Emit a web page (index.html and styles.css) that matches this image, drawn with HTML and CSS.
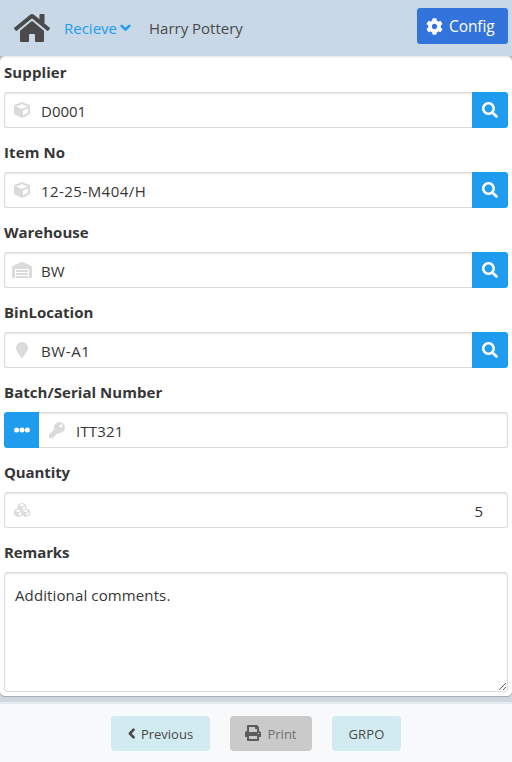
FILE: index.html
```html
<!DOCTYPE html>
<html lang="en">
<head>
<meta charset="utf-8">
<title>Recieve</title>
<link rel="stylesheet" href="styles.css">
</head>
<body>
<svg class="sprite" aria-hidden="true">
  <symbol id="search" viewBox="0 0 512 512"><path d="M505 442.7L405.3 343c-4.5-4.5-10.6-7-17-7H372c27.6-35.3 44-79.7 44-128C416 93.1 322.9 0 208 0S0 93.1 0 208s93.1 208 208 208c48.3 0 92.7-16.4 128-44v16.3c0 6.4 2.5 12.5 7 17l99.7 99.7c9.4 9.4 24.6 9.4 33.9 0l28.3-28.3c9.4-9.4 9.4-24.6.1-34zM208 336c-70.7 0-128-57.2-128-128 0-70.7 57.2-128 128-128 70.7 0 128 57.2 128 128 0 70.7-57.2 128-128 128z"/></symbol>
  <symbol id="cube" viewBox="0 0 512 512"><path d="M239.1 6.3l-208 78c-18.7 7-31.1 25-31.1 45v225.1c0 18.2 10.3 34.8 26.5 42.9l208 104c13.5 6.8 29.4 6.8 42.9 0l208-104c16.3-8.1 26.5-24.8 26.5-42.9V129.3c0-20-12.4-37.9-31.1-44.9l-208-78C262 2.2 250 2.2 239.1 6.3zM256 68.4l192 72v1.1l-192 78-192-78v-1.1l192-72zm32 356V275.5l160-65v133.9l-160 80z"/></symbol>
</svg>
<header class="navbar">
  <svg class="home" viewBox="0 0 576 512"><path d="M280.37 148.26L96 300.11V464a16 16 0 0 0 16 16l112.06-.29a16 16 0 0 0 15.92-16V368a16 16 0 0 1 16-16h64a16 16 0 0 1 16 16v95.64a16 16 0 0 0 16 16.05L464 480a16 16 0 0 0 16-16V300L295.67 148.26a12.19 12.19 0 0 0-15.3 0zM571.6 251.47L488 182.56V44.05a12 12 0 0 0-12-12h-56a12 12 0 0 0-12 12v72.61L318.47 43a48 48 0 0 0-61 0L4.34 251.47a12 12 0 0 0-1.6 16.9l25.5 31A12 12 0 0 0 45.15 301l235.22-193.74a12.19 12.19 0 0 1 15.3 0L530.9 301a12 12 0 0 0 16.9-1.6l25.5-31a12 12 0 0 0-1.7-16.93z"/></svg>
  <a class="nav-link"><span class="receive">Recieve</span><svg class="caret" viewBox="0 0 11 8"><path d="M1.7 1.9L5.5 5.6L9.3 1.9"/></svg></a>
  <span class="user">Harry Pottery</span>
  <button class="config"><svg viewBox="0 0 512 512"><path d="M487.4 315.7l-42.6-24.6c4.3-23.2 4.3-47 0-70.2l42.6-24.6c4.9-2.8 7.1-8.6 5.5-14-11.1-35.6-30-67.8-54.7-94.6-3.8-4.1-10-5.1-14.8-2.3L380.8 110c-17.9-15.4-38.5-27.3-60.8-35.1V25.8c0-5.6-3.9-10.5-9.4-11.7-36.7-8.2-74.3-7.8-109.2 0-5.5 1.2-9.4 6.1-9.4 11.7V75c-22.2 7.9-42.8 19.8-60.8 35.1L88.7 85.5c-4.9-2.8-11-1.9-14.8 2.3-24.7 26.7-43.6 58.9-54.7 94.6-1.7 5.4.6 11.2 5.5 14L67.3 221c-4.3 23.2-4.3 47 0 70.2l-42.6 24.6c-4.9 2.8-7.1 8.6-5.5 14 11.1 35.6 30 67.8 54.7 94.6 3.8 4.1 10 5.1 14.8 2.3l42.6-24.6c17.9 15.4 38.5 27.3 60.8 35.1v49.2c0 5.6 3.9 10.5 9.4 11.7 36.7 8.2 74.3 7.8 109.2 0 5.5-1.2 9.4-6.1 9.4-11.7v-49.2c22.2-7.9 42.8-19.8 60.8-35.1l42.6 24.6c4.9 2.8 11 1.9 14.8-2.3 24.7-26.7 43.6-58.9 54.7-94.6 1.5-5.5-.7-11.3-5.6-14.1zM256 336c-44.1 0-80-35.9-80-80s35.9-80 80-80 80 35.9 80 80-35.9 80-80 80z"/></svg><span>Config</span></button>
</header>

<main class="card">
  <section class="field">
    <label class="label"><span class="wider">Supplier</span></label>
    <div class="group">
      <div class="control"><span class="icon"><svg width="16" height="16"><use href="#cube"/></svg></span><span class="value">D0001</span></div>
      <button class="addon"><svg width="16" height="16"><use href="#search"/></svg></button>
    </div>
  </section>
  <section class="field">
    <label class="label"><span class="wider">Item No</span></label>
    <div class="group">
      <div class="control"><span class="icon"><svg width="16" height="16"><use href="#cube"/></svg></span><span class="value item">12-25-M404/H</span></div>
      <button class="addon"><svg width="16" height="16"><use href="#search"/></svg></button>
    </div>
  </section>
  <section class="field">
    <label class="label"><span>Warehouse</span></label>
    <div class="group">
      <div class="control"><span class="icon"><svg width="20" height="16" viewBox="0 0 640 512"><path d="M504 352H136.4c-4.4 0-8 3.6-8 8l-.1 48c0 4.4 3.6 8 8 8H504c4.4 0 8-3.6 8-8v-48c0-4.4-3.6-8-8-8zm0 96H136.1c-4.4 0-8 3.6-8 8l-.1 48c0 4.4 3.6 8 8 8h368c4.4 0 8-3.6 8-8v-48c0-4.4-3.6-8-8-8zm0-192H136.6c-4.4 0-8 3.6-8 8l-.1 48c0 4.4 3.6 8 8 8H504c4.4 0 8-3.6 8-8v-48c0-4.4-3.6-8-8-8zm106.5-139L338.4 3.7a48.15 48.15 0 0 0-36.9 0L29.5 117C11.7 124.5 0 141.9 0 161.3V504c0 4.4 3.6 8 8 8h80c4.4 0 8-3.6 8-8V256c0-17.6 14.6-32 32.6-32h382.8c18 0 32.6 14.4 32.6 32v248c0 4.4 3.6 8 8 8h80c4.4 0 8-3.6 8-8V161.3c0-19.4-11.7-36.8-29.5-44.3z"/></svg></span><span class="value">BW</span></div>
      <button class="addon"><svg width="16" height="16"><use href="#search"/></svg></button>
    </div>
  </section>
  <section class="field">
    <label class="label"><span>BinLocation</span></label>
    <div class="group">
      <div class="control"><span class="icon"><svg width="12" height="16" viewBox="0 0 384 512"><path d="M172.268 501.67C26.97 291.031 0 269.413 0 192 0 85.961 85.961 0 192 0s192 85.961 192 192c0 77.413-26.97 99.031-172.268 309.67-9.535 13.774-29.93 13.773-39.464 0z"/></svg></span><span class="value bin">BW-A1</span></div>
      <button class="addon"><svg width="16" height="16"><use href="#search"/></svg></button>
    </div>
  </section>
  <section class="field">
    <label class="label"><span class="batch">Batch/Serial Number</span></label>
    <div class="group leading">
      <button class="addon"><svg width="16" height="16" viewBox="0 0 16 16"><circle cx="2.6" cy="8" r="2.5"/><circle cx="8" cy="8" r="2.5"/><circle cx="13.4" cy="8" r="2.5"/></svg></button>
      <div class="control"><span class="icon"><svg width="16" height="16" viewBox="0 0 512 512"><path d="M512 176.001C512 273.203 433.202 352 336 352c-11.22 0-22.19-1.062-32.827-3.069l-24.012 27.014A23.999 23.999 0 0 1 261.223 384H224v40c0 13.255-10.745 24-24 24h-40v40c0 13.255-10.745 24-24 24H24c-13.255 0-24-10.745-24-24v-78.059c0-6.365 2.529-12.47 7.029-16.971l161.802-161.802C163.108 213.814 160 195.271 160 176 160 78.798 238.797.001 335.999 0 433.488-.001 512 78.511 512 176.001zM336 128c0 26.51 21.49 48 48 48s48-21.49 48-48-21.49-48-48-48-48 21.49-48 48z"/></svg></span><span class="value serial">ITT321</span></div>
    </div>
  </section>
  <section class="field">
    <label class="label"><span class="quantity">Quantity</span></label>
    <div class="group">
      <div class="control solo"><span class="icon"><svg width="16" height="16" viewBox="0 0 512 512"><path d="M488.6 250.2L392 214V105.5c0-15-9.3-28.4-23.4-33.7l-100-37.5c-8.1-3.1-17.1-3.1-25.3 0l-100 37.5c-14.1 5.3-23.4 18.7-23.4 33.7V214l-96.6 36.2C9.3 255.5 0 268.9 0 283.9V394c0 13.6 7.7 26.1 19.9 32.2l100 50c10.1 5.1 22.1 5.1 32.2 0l103.9-52 103.9 52c10.1 5.1 22.1 5.1 32.2 0l100-50c12.2-6.1 19.9-18.6 19.9-32.2V283.9c0-15-9.3-28.4-23.4-33.7zM358 214.8l-85 31.9v-68.2l85-37v73.3zM154 104.1l102-38.2 102 38.2v.6l-102 41.4-102-41.4v-.6zm84 291.1l-85 42.5v-79.1l85-38.8v75.4zm0-112l-102 41.4-102-41.4v-.6l102-38.2 102 38.2v.6zm240 112l-85 42.5v-79.1l85-38.8v75.4zm0-112l-102 41.4-102-41.4v-.6l102-38.2 102 38.2v.6z"/></svg></span><span class="value number">5</span></div>
    </div>
  </section>
  <section class="field">
    <label class="label"><span class="quantity">Remarks</span></label>
    <textarea class="textarea">Additional comments.</textarea>
  </section>
</main>

<footer class="footer">
  <button class="action previous"><svg class="back" width="7" height="11" viewBox="0 0 7 11"><path d="M5.6 1.6L1.9 5.5L5.6 9.4"/></svg><span>Previous</span></button>
  <button class="action print"><svg width="16" height="16" viewBox="0 0 512 512"><path d="M448 192V77.25c0-8.49-3.37-16.62-9.37-22.63L393.37 9.37c-6-6-14.14-9.37-22.63-9.37H96C78.33 0 64 14.33 64 32v160c-35.35 0-64 28.65-64 64v112c0 8.84 7.16 16 16 16h48v96c0 17.67 14.33 32 32 32h320c17.67 0 32-14.33 32-32v-96h48c8.84 0 16-7.16 16-16V256c0-35.35-28.65-64-64-64zm-64 256H128v-96h256v96zm0-224H128V64h192v48c0 8.84 7.16 16 16 16h48v96zm48 72c-13.25 0-24-10.75-24-24 0-13.26 10.75-24 24-24s24 10.74 24 24c0 13.25-10.75 24-24 24z"/></svg><span>Print</span></button>
  <button class="action grpo"><span>GRPO</span></button>
</footer>
</body>
</html>
```
FILE: styles.css
```css
* {
  box-sizing: border-box;
}

body {
  margin: 0;
  height: 762px;
  display: flex;
  flex-direction: column;
  overflow: hidden;
  background: linear-gradient(#a9bccd 0 80px, #d1d9df 80px);
  color: #363636;
  font: 15px/24px "Open Sans", "Noto Sans", sans-serif;
}

button {
  border: 0;
  padding: 0;
  margin: 0;
  font: inherit;
  color: inherit;
  display: flex;
  align-items: center;
}

svg {
  display: block;
  flex: none;
  fill: currentColor;
}

.sprite {
  position: absolute;
  width: 0;
  height: 0;
}

.navbar {
  flex: none;
  height: 56px;
  display: flex;
  align-items: center;
  padding: 0 4px 0 14px;
  background: #c8d8e7;
  color: #4a4a4a;
}

.home {
  width: 36px;
  height: 32px;
}

.nav-link {
  display: flex;
  align-items: center;
  gap: 3px;
  width: 85px;
  margin-left: 14px;
  color: #209cee;
}

.caret {
  width: 11px;
  height: 8px;
}

.caret path,
.back path {
  fill: none;
  stroke: currentColor;
  stroke-width: 2.6;
  stroke-linecap: round;
  stroke-linejoin: round;
}

.config {
  width: 91px;
  height: 36px;
  margin: -4px 0 0 auto;
  padding-left: 9px;
  gap: 6px;
  border-radius: 3px;
  background: #3273dc;
  color: #fff;
  font-size: 15.5px;
  letter-spacing: -0.1px;
}

.config svg {
  width: 17px;
  height: 17px;
}

.card {
  flex: none;
  height: 640px;
  padding: 4px;
  background: #fff;
  border-radius: 5px;
  box-shadow: inset 0 2px 2px -1px rgba(10, 10, 10, 0.1), 0 1px 1px rgba(10, 30, 50, 0.25);
}

.field {
  height: 80px;
}

.label {
  display: block;
  height: 32px;
  font-weight: 700;
}

.wider {
  letter-spacing: 0.1px;
}

.batch {
  letter-spacing: 0.05px;
}

.quantity {
  letter-spacing: -0.1px;
}

.group {
  display: flex;
  height: 36px;
}

.control {
  flex: 1;
  display: flex;
  align-items: center;
  border: 1px solid #dbdbdb;
  border-right: 0;
  border-radius: 3px 0 0 3px;
  box-shadow: inset 0 1px 2px rgba(10, 10, 10, 0.1);
}

.leading .control {
  border: 1px solid #dbdbdb;
  border-left: 0;
  border-radius: 0 3px 3px 0;
}

.control.solo {
  border: 1px solid #dbdbdb;
  border-radius: 3px;
}

.icon {
  width: 36px;
  display: flex;
  justify-content: center;
  color: #dbdbdb;
  margin-left: -1px;
}

.leading .icon {
  margin-left: 0;
}

.value {
  padding-top: 2px;
  margin-left: 1px;
}

.item {
  letter-spacing: 0.45px;
}

.bin {
  letter-spacing: 0.6px;
}

.serial {
  letter-spacing: 0.2px;
}

.number {
  margin-left: auto;
  margin-right: 24px;
}

.addon {
  flex: none;
  width: 36px;
  justify-content: center;
  background: #209cee;
  color: #fff;
  border-radius: 0 3px 3px 0;
}

.leading .addon {
  width: 35px;
  border-radius: 3px 0 0 3px;
}

.textarea {
  display: block;
  width: 100%;
  height: 120px;
  padding: 10px;
  border: 1px solid #dbdbdb;
  border-radius: 3px;
  box-shadow: inset 0 1px 2px rgba(10, 10, 10, 0.1);
  font: inherit;
  letter-spacing: 0.12px;
  color: inherit;
  resize: vertical;
  outline: 0;
}

.footer {
  flex: none;
  height: 60px;
  margin-top: 6px;
  display: flex;
  justify-content: center;
  align-items: center;
  gap: 20px;
  border-top: 2px solid #e5eaee;
  background: #f8f9fb;
  color: #4a4a4a;
  font-size: 13px;
}

.action {
  height: 35px;
  justify-content: center;
  border-radius: 4px;
  background: #d1ebf0;
}

.action span {
  padding-top: 1px;
}

.previous {
  width: 99px;
  gap: 6px;
}

.print {
  width: 82px;
  gap: 6px;
  background: #cacaca;
  color: #707070;
}

.print svg {
  color: #5c5c5c;
}

.grpo {
  width: 69px;
  letter-spacing: 0.2px;
}
```
